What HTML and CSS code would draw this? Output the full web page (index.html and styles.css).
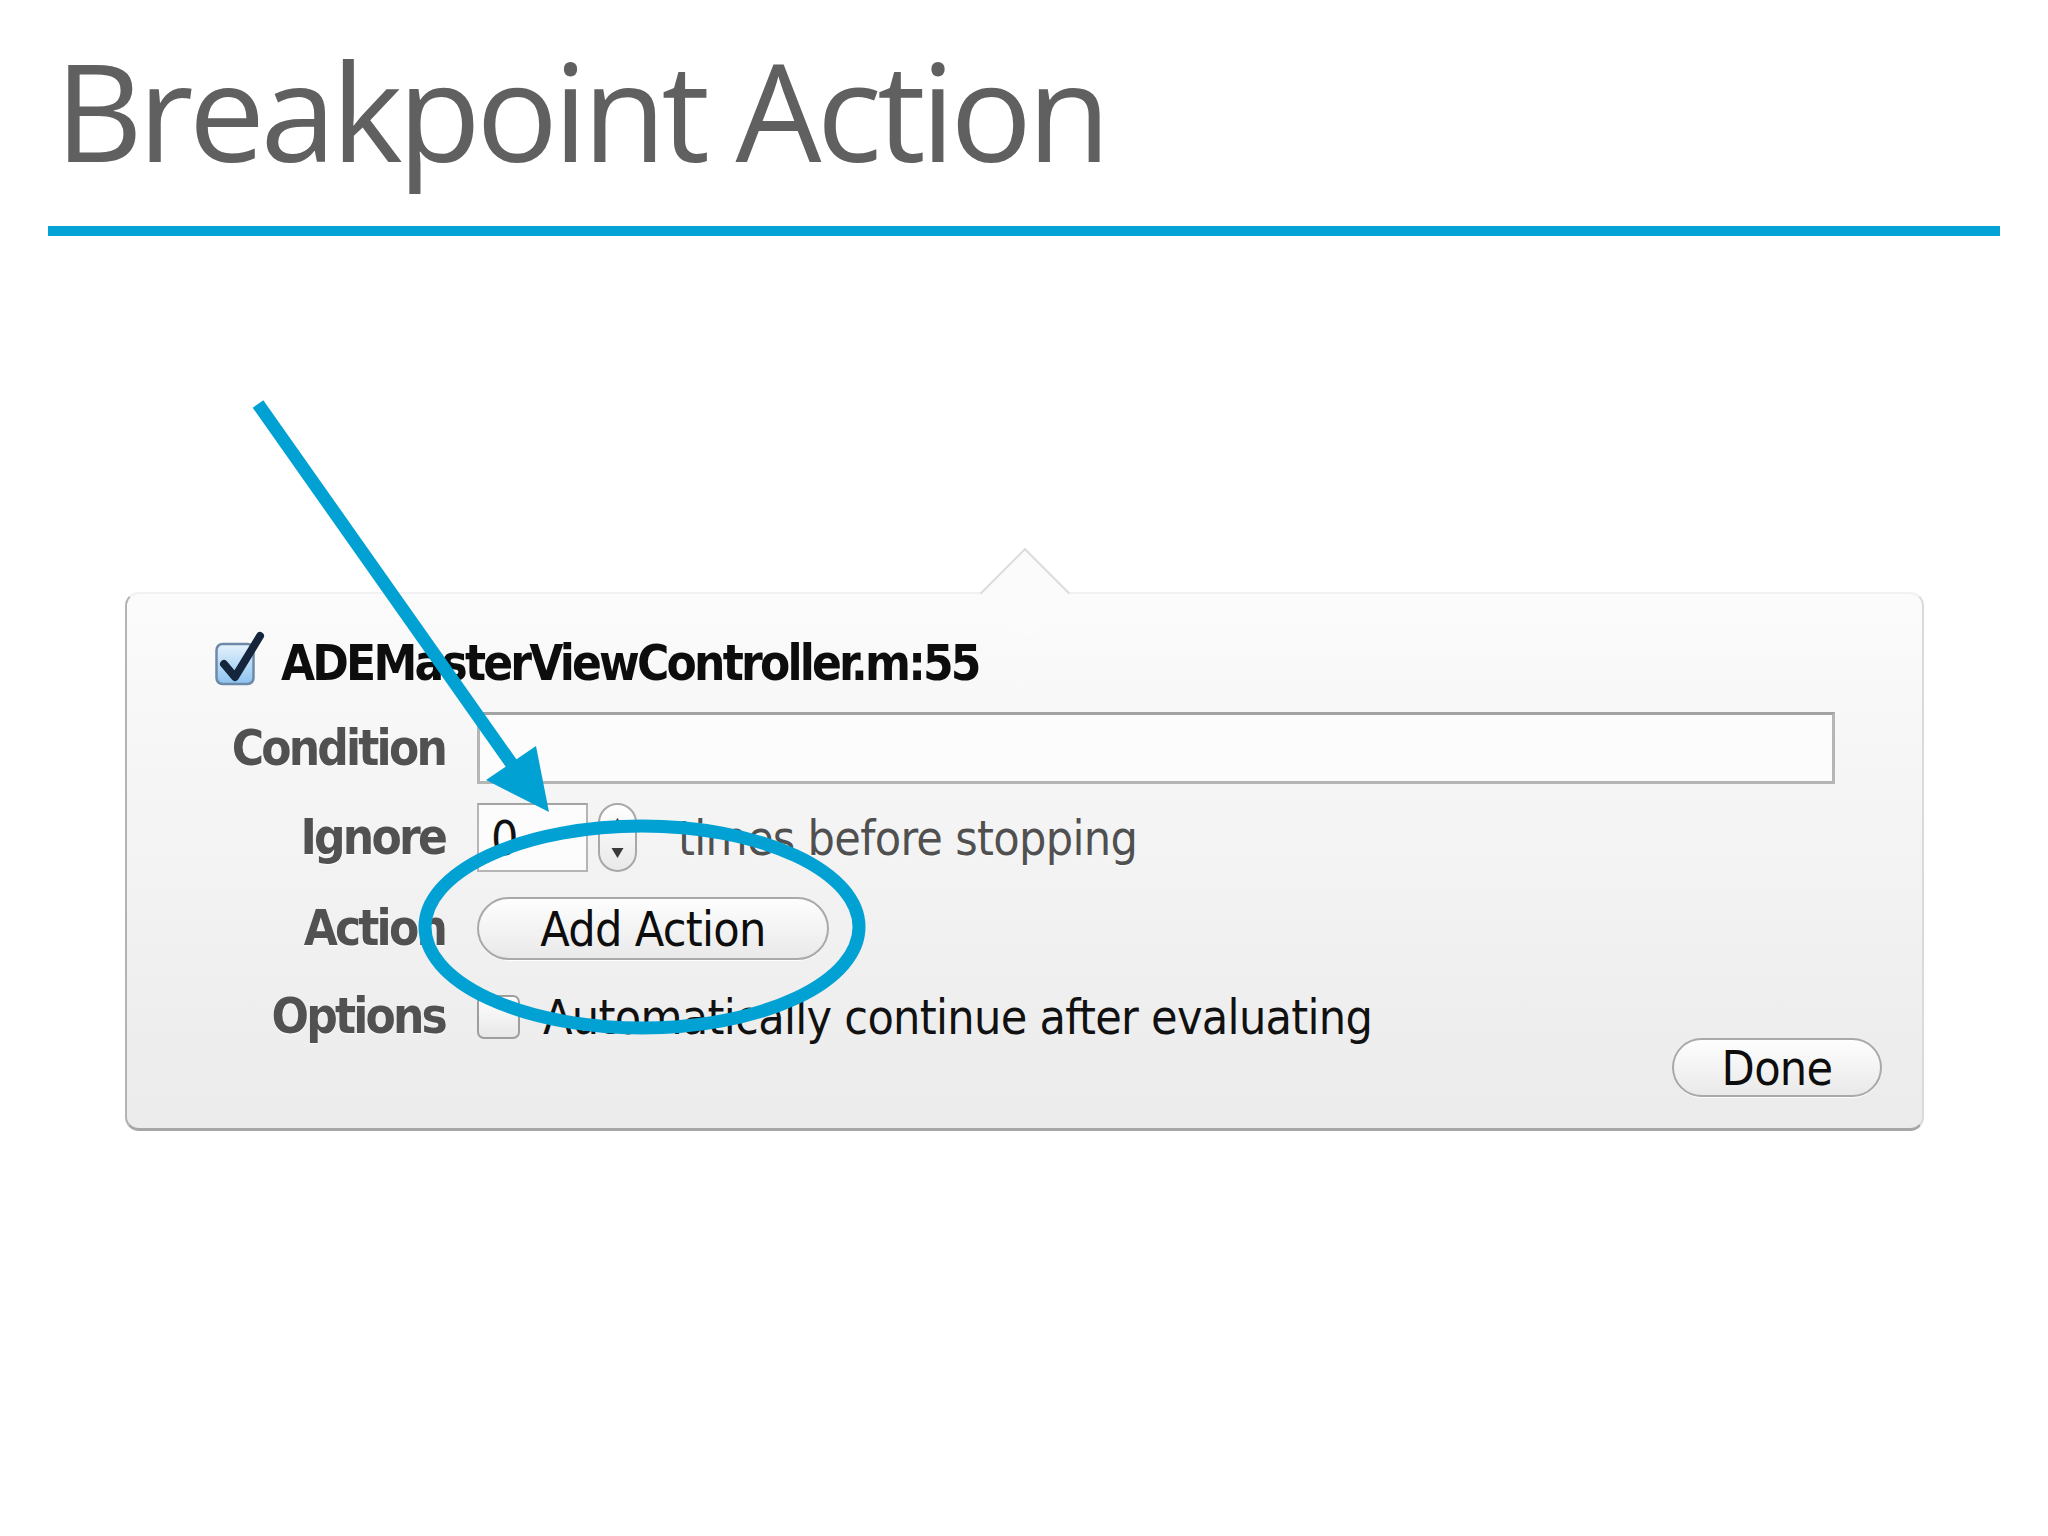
FILE: index.html
```html
<!DOCTYPE html>
<html lang="en">
<head>
<meta charset="utf-8">
<title>Breakpoint Action</title>
<link rel="stylesheet" href="styles.css">
</head>
<body>
<div class="slide">
  <header class="slide-head">
    <h1 class="title">Breakpoint Action</h1>
    <div class="rule"></div>
  </header>
  <main class="stage">
    <section class="popover">
      <div class="pop-head">
        <svg class="check-on" viewBox="0 0 50 56" width="50" height="56">
          <defs>
            <linearGradient id="cbfill" x1="0" y1="0" x2="0" y2="1">
              <stop offset="0" stop-color="#e6f2fc"/>
              <stop offset="0.5" stop-color="#b9dbf7"/>
              <stop offset="1" stop-color="#8cc2ef"/>
            </linearGradient>
          </defs>
          <rect x="1.5" y="14" width="37" height="40" rx="6" fill="url(#cbfill)" stroke="#6d8aa8" stroke-width="2.5"/>
          <path d="M9 34 L20 47 L45 6" fill="none" stroke="#14253c" stroke-width="8" stroke-linecap="round" stroke-linejoin="round"/>
        </svg>
        <span class="bp-name">ADEMasterViewController.m:55</span>
      </div>
      <div class="row row-cond">
        <div class="label">Condition</div>
        <div class="ctrl"><div class="field field-wide"></div></div>
      </div>
      <div class="row row-ignore">
        <div class="label">Ignore</div>
        <div class="ctrl">
          <div class="field field-num">0</div>
          <div class="stepper">
            <svg class="stepper-arrows" viewBox="0 0 35 65" width="35" height="65">
              <polygon points="11.5,22 23.5,22 17.5,13" fill="#3a3a3a"/>
              <polygon points="11.5,43 23.5,43 17.5,53" fill="#3a3a3a"/>
            </svg>
          </div>
          <span class="hint">times before stopping</span>
        </div>
      </div>
      <div class="row row-action">
        <div class="label">Action</div>
        <div class="ctrl"><div class="btn btn-add">Add Action</div></div>
      </div>
      <div class="row row-opts">
        <div class="label">Options</div>
        <div class="ctrl">
          <div class="check-off"></div>
          <span class="opt-text">Automatically continue after evaluating</span>
        </div>
      </div>
      <div class="pop-foot">
        <div class="btn btn-done">Done</div>
      </div>
    </section>
  </main>
  <svg class="annot" viewBox="0 0 2048 1536" width="2048" height="1536">
    <ellipse cx="642" cy="927" rx="217" ry="101" fill="none" stroke="#02a1d4" stroke-width="13"/>
    <line x1="258" y1="404" x2="516" y2="770" stroke="#02a1d4" stroke-width="13"/>
    <polygon points="549,812 486,780 536,746" fill="#02a1d4"/>
  </svg>
</div>
</body>
</html>
```

FILE: styles.css
```css
html, body {
  margin: 0;
  padding: 0;
  background: #ffffff;
}

.slide {
  position: relative;
  width: 2048px;
  height: 1536px;
  overflow: hidden;
  background: #ffffff;
}

.slide-head {
  padding: 42px 48px 0;
}

.title {
  margin: 0 0 0 7px;
  font-family: "Open Sans", sans-serif;
  font-weight: 400;
  font-size: 136px;
  line-height: 136px;
  letter-spacing: -4.8px;
  color: #606060;
}

.rule {
  margin-top: 48px;
  height: 10px;
  background: #04a3d5;
}

.stage {
  padding: 356px 0 0 125px;
}

.popover {
  position: relative;
  width: 1799px;
  box-sizing: border-box;
  border-style: solid;
  border-width: 2px 2px 3px 2px;
  border-color: #f1f1f1 #dadada #a6a6a6 #b3b3b3;
  border-radius: 14px;
  background: linear-gradient(#fbfbfb, #ebebeb);
  padding: 46px 40px 31px 0;
  font-family: "DejaVu Sans Condensed", "DejaVu Sans", sans-serif;
  font-stretch: condensed;
}

.popover::before {
  content: "";
  position: absolute;
  left: 866px;
  top: -33px;
  width: 62px;
  height: 62px;
  background: #fbfbfb;
  border-top: 2px solid #dcdcdc;
  border-left: 2px solid #dcdcdc;
  transform: rotate(45deg);
}

.pop-head {
  position: relative;
  display: flex;
  align-items: center;
  height: 46px;
  padding-left: 88px;
  margin-bottom: 26px;
}

.check-on {
  flex: none;
  align-self: flex-end;
  margin-right: 16px;
}

.bp-name {
  font-weight: 700;
  font-size: 49px;
  line-height: 1;
  letter-spacing: -2.8px;
  color: #0d0d0d;
}

.row {
  display: grid;
  grid-template-columns: 318px 1fr;
  column-gap: 32px;
  align-items: center;
  margin-right: 47px;
}

.row-cond { height: 72px; }
.row-ignore { height: 69px; margin-top: 19px; }
.row-action { height: 63px; margin-top: 25px; }
.row-opts { height: 44px; margin-top: 32px; }

.label {
  text-align: right;
  font-weight: 700;
  font-size: 49px;
  line-height: 1;
  letter-spacing: -2.8px;
  color: #515151;
  text-shadow: 0 1px 1px rgba(255, 255, 255, 0.9);
}

.ctrl {
  display: flex;
  align-items: center;
  height: 100%;
  font-size: 48px;
  line-height: 1;
  letter-spacing: -0.7px;
}

.field {
  box-sizing: border-box;
  height: 100%;
  background: #fcfcfc;
  border: 3px solid #b5b5b5;
  border-top-color: #a3a3a3;
}

.field-wide {
  width: 100%;
}

.field-num {
  width: 111px;
  padding-left: 12px;
  display: flex;
  align-items: center;
  color: #111111;
  border-width: 2px;
}

.stepper {
  box-sizing: border-box;
  width: 39px;
  height: 69px;
  margin-left: 10px;
  border: 2px solid #a8a8a8;
  border-radius: 20px;
  background: linear-gradient(#ffffff, #e9e9e9);
}

.stepper-arrows {
  display: block;
}

.hint {
  margin-left: 41px;
  color: #505050;
  text-shadow: 0 1px 1px rgba(255, 255, 255, 0.9);
}

.btn {
  box-sizing: border-box;
  display: flex;
  align-items: center;
  justify-content: center;
  border: 2px solid #a9a9a9;
  border-radius: 32px;
  background: linear-gradient(#fefefe, #e9e9e9);
  color: #0d0d0d;
  font-size: 48px;
  line-height: 1;
  letter-spacing: -0.7px;
  box-shadow: 0 1px 0 rgba(255, 255, 255, 0.9);
}

.btn-add {
  width: 352px;
  height: 63px;
}

.check-off {
  flex: none;
  box-sizing: border-box;
  width: 43px;
  height: 44px;
  border: 2px solid #9e9e9e;
  border-radius: 7px;
  background: linear-gradient(#fefefe, #e8e8e8);
}

.opt-text {
  margin-left: 23px;
  color: #111111;
}

.pop-foot {
  display: flex;
  justify-content: flex-end;
  margin-top: 2px;
}

.btn-done {
  width: 210px;
  height: 59px;
}

.annot {
  position: absolute;
  left: 0;
  top: 0;
  pointer-events: none;
}
```
